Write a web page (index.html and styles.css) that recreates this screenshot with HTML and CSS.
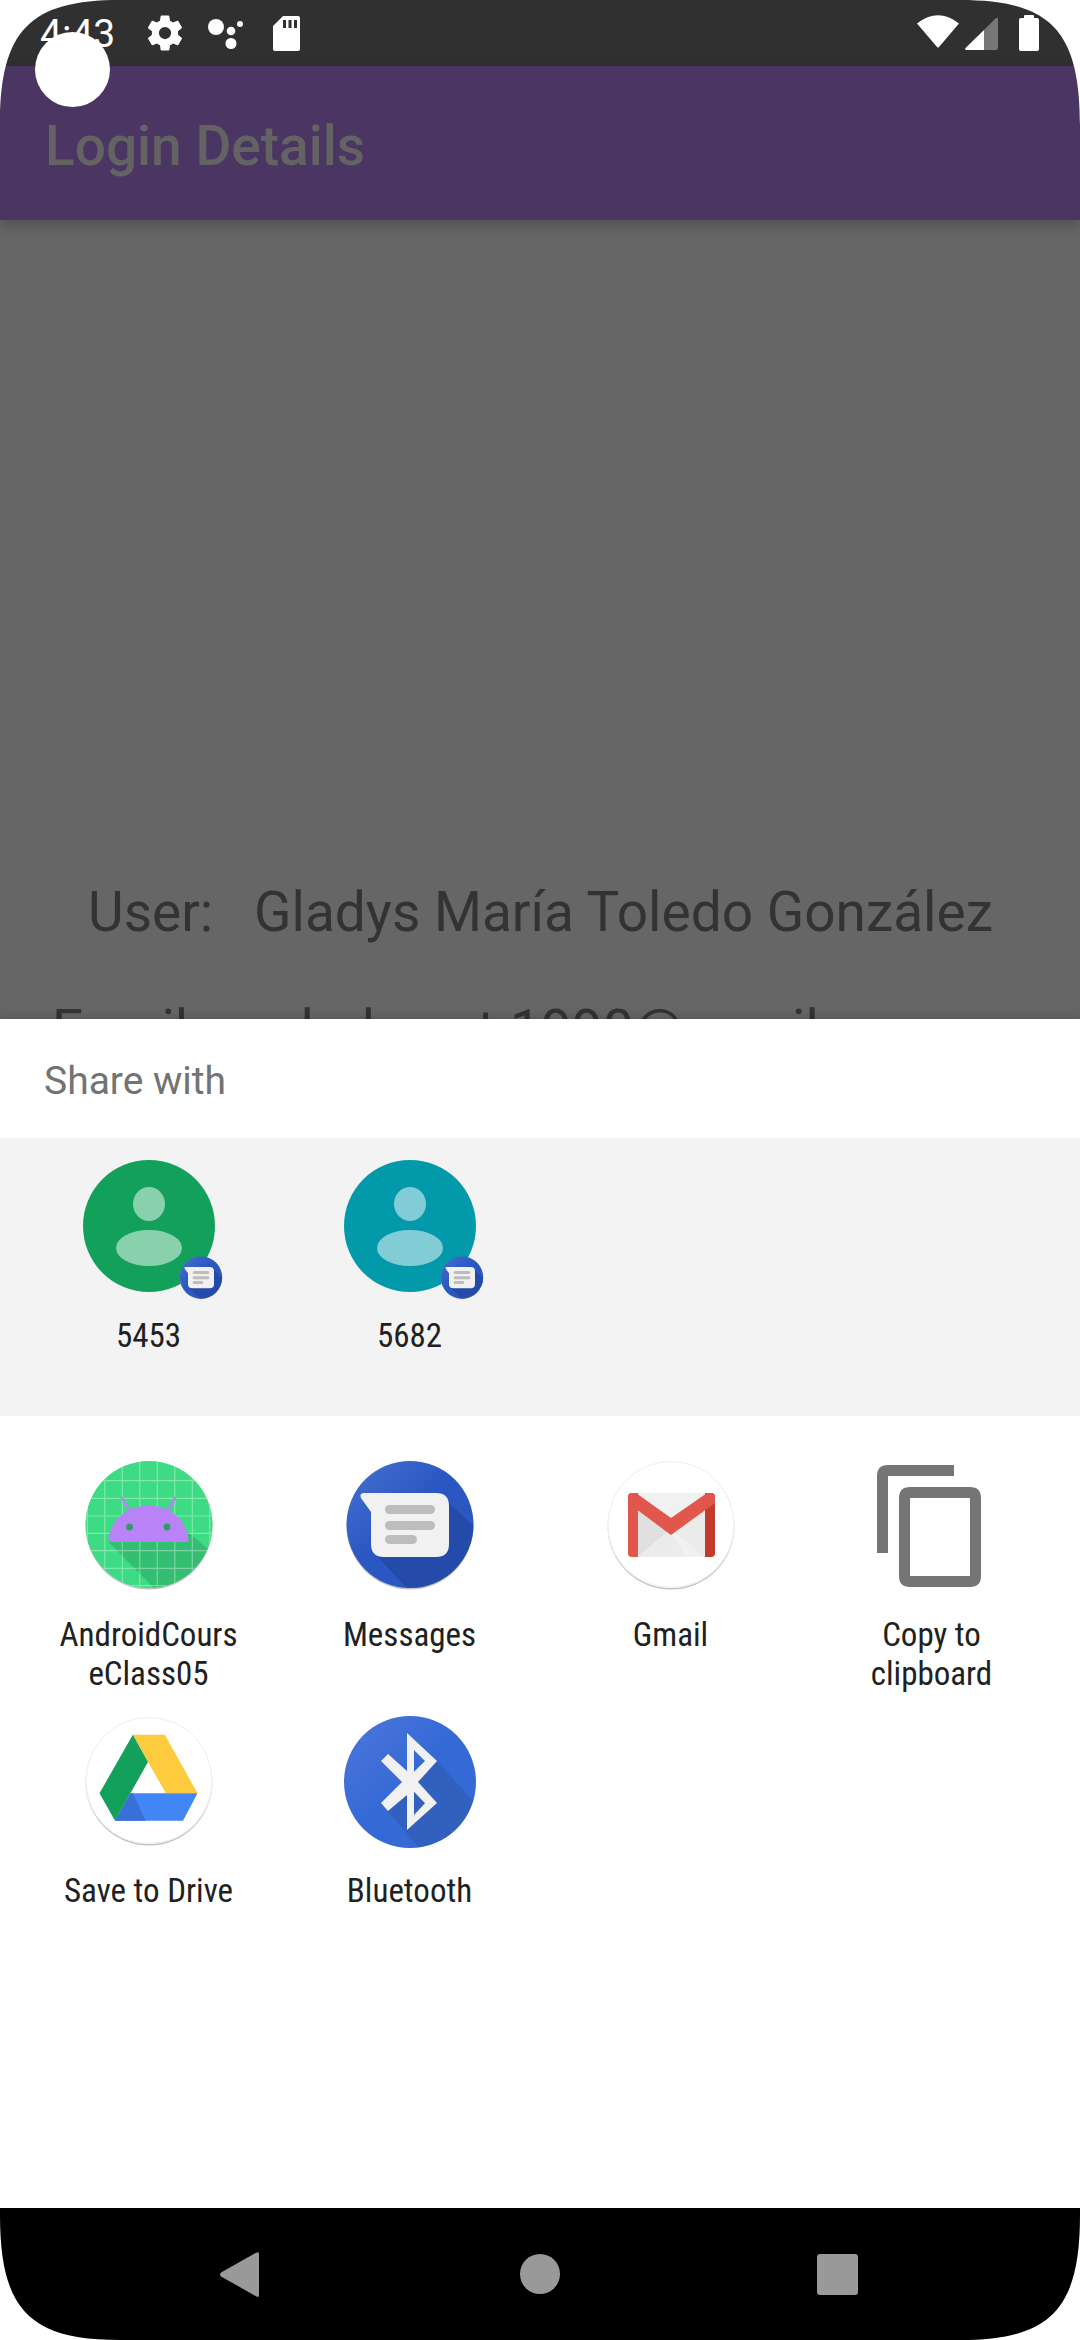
FILE: index.html
```html
<!DOCTYPE html>
<html lang="en">
<head>
<meta charset="utf-8">
<title>Share with</title>
<link rel="stylesheet" href="styles.css">
</head>
<body>
<div class="screen">
  <header class="status">
    <span class="time">4:43</span>
    <svg class="ic-gear" viewBox="0 0 24 24"><path fill="#fff" d="M19.4 13c.04-.32.1-.66.1-1s-.06-.68-.1-1l2.1-1.65c.2-.15.25-.42.13-.64l-2-3.46c-.12-.22-.39-.3-.61-.22l-2.49 1c-.52-.4-1.08-.73-1.69-.98l-.38-2.65A.49.49 0 0 0 14 2h-4c-.25 0-.46.18-.49.42l-.38 2.65c-.61.25-1.17.59-1.69.98l-2.49-1a.5.5 0 0 0-.61.22l-2 3.46c-.13.22-.07.49.12.64L4.57 11c-.04.32-.07.65-.07 1s.03.68.07 1l-2.11 1.65c-.19.15-.25.42-.12.64l2 3.46c.12.22.39.3.61.22l2.49-1c.52.4 1.08.73 1.69.98l.38 2.65c.03.24.24.42.49.42h4c.25 0 .46-.18.49-.42l.38-2.65c.61-.25 1.17-.59 1.69-.98l2.49 1c.23.09.49 0 .61-.22l2-3.46c.12-.22.07-.49-.12-.64L19.4 13zM12 15.5a3.5 3.5 0 1 1 0-7 3.5 3.5 0 0 1 0 7z"/></svg>
    <svg class="ic-dots" viewBox="0 0 35 35"><circle cx="8" cy="11" r="8" fill="#fff"/><circle cx="32" cy="8" r="3" fill="#fff"/><circle cx="23" cy="15" r="4.3" fill="#fff"/><circle cx="23" cy="27.5" r="5.5" fill="#fff"/></svg>
    <svg class="ic-sd" viewBox="0 0 27 35"><path fill="#fff" d="M10 0h15a2 2 0 0 1 2 2v31a2 2 0 0 1-2 2H2a2 2 0 0 1-2-2V10zM10 4v8h3V4zM15.500 4v8h3V4zM21 4v8h3V4z" fill-rule="evenodd"/></svg>
    <span class="spacer"></span>
    <svg class="ic-wifi" viewBox="0 0 42 33"><path fill="#fff" d="M0 8.500Q21-8 42 8.500L22 32a1.300 1.300 0 0 1-2 0z"/></svg>
    <svg class="ic-signal" viewBox="0 0 33 33"><path fill="#777" d="M19 13 31 1q2-1 2 1v29q0 2-2 2H19z"/><path fill="#fff" d="M19 13v20H1q-1.500-.5-.5-2z"/></svg>
    <svg class="ic-batt" viewBox="0 0 20 36"><path fill="#fff" d="M5 3V1a1 1 0 0 1 1-1h8a1 1 0 0 1 1 1v2h3a2 2 0 0 1 2 2v29a2 2 0 0 1-2 2H2a2 2 0 0 1-2-2V5a2 2 0 0 1 2-2z"/></svg>
  </header>
  <div class="appbar"><h1 class="title">Login Details</h1></div>
  <main class="content">
    <p class="user">User:&nbsp;&nbsp;&nbsp;Gladys María Toledo González</p>
    <p class="email">Email:&nbsp;&nbsp;&nbsp;&nbsp;&nbsp;gladysmt.1990@gmail.com</p>
  </main>
  <section class="sheet">
    <div class="sheet-title">Share with</div>
    <div class="direct">
      <div class="cell">
        <div class="avatar green">
          <svg class="fill" viewBox="0 0 132 132"><ellipse cx="66" cy="44" rx="16" ry="17" fill="#fff" fill-opacity=".5"/><ellipse cx="66" cy="88" rx="33" ry="18" fill="#fff" fill-opacity=".5"/></svg>
          <svg class="badge" viewBox="0 0 132 132"><use href="#msg"/></svg>
        </div>
        <div class="label">5453</div>
      </div>
      <div class="cell">
        <div class="avatar teal">
          <svg class="fill" viewBox="0 0 132 132"><ellipse cx="66" cy="44" rx="16" ry="17" fill="#fff" fill-opacity=".5"/><ellipse cx="66" cy="88" rx="33" ry="18" fill="#fff" fill-opacity=".5"/></svg>
          <svg class="badge" viewBox="0 0 132 132"><use href="#msg"/></svg>
        </div>
        <div class="label">5682</div>
      </div>
    </div>
    <div class="apps">
      <div class="cell app">
        <svg class="icon" viewBox="0 0 132 132"><defs><clipPath id="c1"><circle cx="66" cy="64.500" r="63.500"/></clipPath></defs>
          <circle cx="66" cy="66" r="63.500" fill="#c4c4c4"/>
          <g clip-path="url(#c1)"><rect width="132" height="132" fill="#3ddc84"/>
            <path d="M25.500 82 75 132H132V95L105 72z" fill="#1f7a4a" fill-opacity=".3"/>
            <path d="M4.300 0V132M21.800 0V132M39.300 0V132M56.800 0V132M74.300 0V132M91.800 0V132M109.300 0V132M126.800 0V132M0 20.700H132M0 38.300H132M0 56H132M0 73.300H132M0 90.700H132M0 108.300H132M0 125.700H132" stroke="#fff" stroke-opacity=".35" stroke-width="1.200"/>
            <path d="M25.500 82C26 60 44 45.500 65.500 45.500S105 60 105.500 82z" fill="#b983f8"/>
            <path d="M39 38 46.500 51M92 38 84.500 51" stroke="#b983f8" stroke-width="2.600" stroke-linecap="round"/>
            <circle cx="46.500" cy="67" r="3.400" fill="#2a9d5f"/><circle cx="84" cy="67" r="3.400" fill="#2a9d5f"/>
          </g>
        </svg>
        <div class="label">AndroidCours<br>eClass05</div>
      </div>
      <div class="cell app">
        <svg class="icon" viewBox="0 0 132 132"><use href="#msg"/></svg>
        <div class="label">Messages</div>
      </div>
      <div class="cell app">
        <svg class="icon" viewBox="0 0 132 132"><defs><clipPath id="c2"><rect x="23" y="33" width="87" height="64" rx="4"/></clipPath></defs>
          <circle cx="66" cy="66" r="63.500" fill="#c4c4c4"/><circle cx="66" cy="64.500" r="63.500" fill="#fff"/><circle cx="66" cy="64.500" r="63" fill="none" stroke="#eee"/>
          <g clip-path="url(#c2)">
            <rect x="23" y="33" width="87" height="64" fill="#f1f1f1"/>
            <path d="M33 44 66 69 33 97z" fill="#e0e0e0"/><path d="M100 44 66 69 100 97z" fill="#ebebeb"/>
            <path d="M33 97H80L66 69z" fill="#ececec"/>
            <path d="M23 33H33V97H23z" fill="#e2574c"/><path d="M100 33H110V97H100z" fill="#c23b2a"/>
            <path d="M23 33H31L66 58 102 33H110V43L66 75 23 43z" fill="#e2574c"/>
          </g>
        </svg>
        <div class="label">Gmail</div>
      </div>
      <div class="cell app">
        <svg class="icon" viewBox="0 0 132 132"><path d="M22 5H88V16H22V93H11V16Q11 5 22 5z" fill="#757575"/><path fill="#757575" fill-rule="evenodd" d="M44 27H104Q115 27 115 38V116Q115 127 104 127H44Q33 127 33 116V38Q33 27 44 27zM44 38V116H104V38z"/></svg>
        <div class="label">Copy to<br>clipboard</div>
      </div>
      <div class="cell app">
        <svg class="icon" viewBox="0 0 132 132"><circle cx="66" cy="66" r="63.500" fill="#c4c4c4"/><circle cx="66" cy="64.500" r="63.500" fill="#fff"/><circle cx="66" cy="64.500" r="63" fill="none" stroke="#eee"/>
          <path d="M49.800 18.700H81.800L114.500 77.300H83L65 46z" fill="#fecb3e"/>
          <path d="M47.500 77.300H114.500L100 104.700H32z" fill="#4285f4"/>
          <path d="M47.500 77.300H50L62.500 104.700H32z" fill="#3a6fd8"/>
          <path d="M49.800 18.700 65 46 32 104.700 16.500 77.300z" fill="#12a05a"/>
        </svg>
        <div class="label">Save to Drive</div>
      </div>
      <div class="cell app">
        <svg class="icon" viewBox="0 0 132 132"><defs><clipPath id="c3"><circle cx="66" cy="66" r="66"/></clipPath><linearGradient id="g3" x1="0" y1="0" x2="1" y2="1"><stop offset="0" stop-color="#4d77da"/><stop offset=".5" stop-color="#3469d6"/></linearGradient></defs>
          <circle cx="66" cy="66" r="66" fill="url(#g3)"/>
          <path clip-path="url(#c3)" d="M37 87 75 132H132V88L93 45 70 66z" fill="#2d4f94" fill-opacity=".35"/>
          <path fill="#f1f1f1" fill-rule="evenodd" d="M63 17 93 45 74 66 93 87 63 114V79L44 95 37 87 58 66 37 45 44 38 63 55zM70 34V55.700L81 45zM70 75.700V99L81 87.300z"/>
        </svg>
        <div class="label">Bluetooth</div>
      </div>
    </div>
  </section>
  <nav class="navbar">
    <svg class="nav-back" viewBox="0 0 39 45"><path fill="#999" d="M36 .8 1 20.500q-2 2 0 4L36 44.200q3 1.800 3-1.200V2q0-3-3-1.200z"/></svg>
    <span class="nav-home"></span>
    <span class="nav-recent"></span>
  </nav>
  <span class="touch"></span>
  <svg class="corner tl" viewBox="0 0 125 130"><path fill="#fff" d="M0 0H120C30 0 0 30 0 125z"/></svg>
  <svg class="corner tr" viewBox="0 0 125 130"><path fill="#fff" d="M0 0H120C30 0 0 30 0 125z"/></svg>
  <svg class="corner bl" viewBox="0 0 125 130"><path fill="#fff" d="M0 0H120C30 0 0 30 0 125z"/></svg>
  <svg class="corner br" viewBox="0 0 125 130"><path fill="#fff" d="M0 0H120C30 0 0 30 0 125z"/></svg>
</div>
<svg class="defs" width="0" height="0"><defs>
  <clipPath id="mc"><circle cx="66" cy="64.500" r="63.500"/></clipPath>
  <linearGradient id="mg" x1="0" y1="0" x2="1" y2="1"><stop offset="0" stop-color="#4670d0"/><stop offset=".45" stop-color="#2b57c2"/></linearGradient>
  <g id="msg">
    <circle cx="66" cy="66" r="63.500" fill="#c4c4c4"/>
    <circle cx="66" cy="64.500" r="63.500" fill="url(#mg)"/>
    <path clip-path="url(#mc)" d="M27 90 67 132H132V68L105 43z" fill="#1d3f8f" fill-opacity=".5"/>
    <path fill="#f1f1f1" d="M20 33H92Q105 33 105 46V84Q105 97 92 97H40Q27 97 27 84V52L17 38Q15 33 20 33z"/>
    <rect x="41" y="45" width="50" height="9" rx="4.500" fill="#bdbdbd"/><rect x="41" y="61" width="50" height="9" rx="4.500" fill="#bdbdbd"/><rect x="41" y="75" width="32" height="9" rx="4.500" fill="#bdbdbd"/>
  </g>
</defs></svg>
</body>
</html>
```
FILE: styles.css
```css
* { box-sizing: border-box; }
html, body { margin: 0; padding: 0; background: #fff; }
body { font-family: Roboto, "Noto Sans", sans-serif; }
.screen { position: relative; width: 1080px; height: 2340px; overflow: hidden; display: flex; flex-direction: column; }
.status { height: 66px; flex: none; background: #303030; display: flex; align-items: flex-start; padding-left: 40px; position: relative; }
.time { color: #fff; font-size: 39px; line-height: 44px; margin-top: 12px; width: 108px; }
.ic-gear { width: 42px; height: 42px; margin-top: 12px; margin-left: -4px; }
.ic-dots { width: 35px; height: 35px; margin-top: 16px; margin-left: 22px; }
.ic-sd { width: 27px; height: 35px; margin-top: 16px; margin-left: 30px; }
.spacer { flex: 1; }
.ic-wifi { width: 42px; height: 33px; margin-top: 15px; }
.ic-signal { width: 33px; height: 33px; margin-top: 17px; margin-left: 6px; }
.ic-batt { width: 20px; height: 36px; margin-top: 15px; margin-left: 21px; margin-right: 41px; }
.appbar { height: 154px; flex: none; background: #4b3663; padding-left: 45px; box-shadow: 0 6px 12px rgba(0,0,0,.2); position: relative; z-index: 1; }
.title { margin: 0; color: #636363; font-size: 55px; font-weight: 500; line-height: 60px; padding-top: 50px; }
.content { height: 799px; flex: none; background: #666; color: #333; font-size: 55px; overflow: hidden; position: relative; }
.user { margin: 0; position: absolute; left: 88px; top: 662px; line-height: 60px; white-space: nowrap; }
.email { margin: 0; position: absolute; left: 52px; top: 780px; height: 19px; overflow: hidden; line-height: 60px; white-space: nowrap; }
.sheet { flex: 1; background: #fff; min-height: 0; position: relative; box-shadow: 0 -3px 8px rgba(0,0,0,.15); }
.sheet-title { height: 119px; padding-left: 44px; padding-top: 41px; color: #737373; font-size: 39px; line-height: 42px; }
.direct { height: 278px; background: #f3f3f3; display: grid; grid-template-columns: repeat(4, 261px); padding: 22px 18px 0; }
.cell { display: flex; flex-direction: column; align-items: center; }
.avatar { width: 132px; height: 132px; border-radius: 50%; position: relative; }
.green { background: #12a05a; }
.teal { background: #0299aa; }
.fill { width: 132px; height: 132px; display: block; }
.badge { position: absolute; left: 96px; top: 96px; width: 44px; height: 44px; }
.label { color: #212121; font-size: 33px; font-stretch: 87%; line-height: 39px; text-align: center; margin-top: 24px; white-space: nowrap; }
.apps { display: grid; grid-template-columns: repeat(4, 261px); grid-auto-rows: 256px; padding: 44px 18px 0; }
.icon { width: 132px; height: 132px; display: block; }
.app .label { margin-top: 23px; }
.navbar { height: 132px; flex: none; background: #000; position: relative; }
.nav-back { position: absolute; left: 220px; top: 44px; width: 39px; height: 45px; }
.nav-home { position: absolute; left: 520px; top: 46px; width: 40px; height: 40px; border-radius: 50%; background: #999; }
.nav-recent { position: absolute; left: 817px; top: 46px; width: 41px; height: 41px; border-radius: 3px; background: #999; }
.touch { position: absolute; left: 35px; top: 32px; width: 75px; height: 75px; border-radius: 50%; background: #fff; z-index: 3; }
.corner { position: absolute; width: 125px; height: 130px; z-index: 2; }
.tl { left: 0; top: 0; }
.tr { right: 0; top: 0; transform: scaleX(-1); }
.bl { left: 0; bottom: 0; transform: scaleY(-1); }
.br { right: 0; bottom: 0; transform: scale(-1, -1); }
.defs { position: absolute; }
```
